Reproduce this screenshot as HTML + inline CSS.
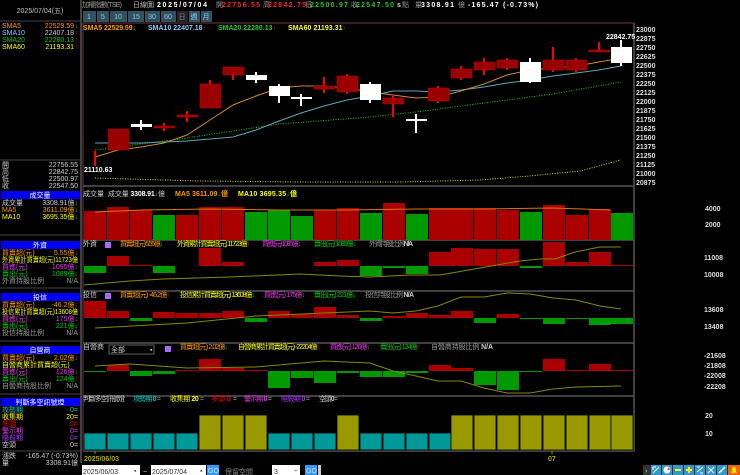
<!DOCTYPE html>
<html><head><meta charset="utf-8"><style>
html,body{margin:0;padding:0;background:#000;width:740px;height:475px;overflow:hidden}
svg{display:block}
text{font-family:"Liberation Sans","Noto Sans CJK TC",sans-serif;font-size:7px}
.b{font-weight:bold}
</style></head><body>
<svg width="740" height="475" viewBox="0 0 740 475" xmlns="http://www.w3.org/2000/svg">
<rect width="740" height="475" fill="#000"/>
<!-- left panel -->
<line x1="81" y1="0" x2="81" y2="463" stroke="#555" stroke-width="1.5"/>
<text x="40" y="13" fill="#bbb" text-anchor="middle" font-family="Liberation Serif" font-size="6">2025/07/04(五)</text>
<line x1="0" y1="21" x2="81" y2="21" stroke="#444"/>
<g font-family="Liberation Serif" font-size="6">
<text x="2" y="28" fill="#f90">SMA5</text><text x="74" y="28" fill="#f90" text-anchor="end">22529.59</text><text x="75" y="28" fill="#0c0">↓</text>
<text x="2" y="35" fill="#8cf">SMA10</text><text x="74" y="35" fill="#ccc" text-anchor="end">22407.18</text><text x="75" y="35" fill="#f00">↑</text>
<text x="2" y="42" fill="#0c0">SMA20</text><text x="74" y="42" fill="#0c0" text-anchor="end">22280.13</text><text x="75" y="42" fill="#f00">↑</text>
<text x="2" y="49" fill="#ff0">SMA60</text><text x="74" y="49" fill="#ff0" text-anchor="end">21193.31</text><text x="75" y="49" fill="#f00">↑</text>
</g>
<line x1="0" y1="160" x2="81" y2="160" stroke="#444"/>
<g fill="#ccc" font-size="6">
<text x="2" y="167">開</text><text x="78" y="167" text-anchor="end">22756.55</text>
<text x="2" y="174">高</text><text x="78" y="174" text-anchor="end">22842.75</text>
<text x="2" y="181">低</text><text x="78" y="181" text-anchor="end">22500.97</text>
<text x="2" y="188">收</text><text x="78" y="188" text-anchor="end">22547.50</text>
</g>
<g font-size="6">
<rect x="1" y="191" width="79" height="8" fill="#0000f0"/><text x="40" y="197.5" fill="#fff" text-anchor="middle">成交量</text>
<text x="2" y="205" fill="#ccc">成交量</text><text x="78" y="205" fill="#ccc" text-anchor="end">3308.91億<tspan fill="#0c0">↓</tspan></text>
<text x="2" y="212" fill="#f90">MA5</text><text x="78" y="212" fill="#f90" text-anchor="end">3611.09億<tspan fill="#0c0">↓</tspan></text>
<text x="2" y="219" fill="#ff0">MA10</text><text x="78" y="219" fill="#ff0" text-anchor="end">3695.35億<tspan fill="#0c0">↓</tspan></text>
<line x1="0" y1="235" x2="81" y2="235" stroke="#444"/>
<rect x="1" y="241" width="79" height="8" fill="#0000f0"/><text x="40" y="247.5" fill="#fff" text-anchor="middle">外資</text>
<text x="2" y="255" fill="#f90">買賣超(元)</text><text x="78" y="255" fill="#f90" text-anchor="end">5.55億<tspan fill="#0c0">↓</tspan></text>
<text x="2" y="262" fill="#ff0" textLength="76" lengthAdjust="spacingAndGlyphs">外資累計買賣超(元)11723億</text>
<text x="2" y="269" fill="#e3e">買進(元)</text><text x="78" y="269" fill="#e3e" text-anchor="end">1095億<tspan fill="#0c0">↓</tspan></text>
<text x="2" y="276" fill="#0c0">賣出(元)</text><text x="78" y="276" fill="#0c0" text-anchor="end">1089億<tspan fill="#0c0">↓</tspan></text>
<text x="2" y="283" fill="#999">外資持股比例</text><text x="78" y="283" fill="#999" text-anchor="end">N/A</text>
<line x1="0" y1="288" x2="81" y2="288" stroke="#444"/>
<rect x="1" y="293" width="79" height="8" fill="#0000f0"/><text x="40" y="299.5" fill="#fff" text-anchor="middle">投信</text>
<text x="2" y="307" fill="#f90">買賣超(元)</text><text x="78" y="307" fill="#f90" text-anchor="end">-46.2億<tspan fill="#f00">↑</tspan></text>
<text x="2" y="314" fill="#ff0" textLength="76" lengthAdjust="spacingAndGlyphs">投信累計買賣超(元)13608億</text>
<text x="2" y="321" fill="#e3e">買進(元)</text><text x="78" y="321" fill="#e3e" text-anchor="end">175億<tspan fill="#0c0">↓</tspan></text>
<text x="2" y="328" fill="#0c0">賣出(元)</text><text x="78" y="328" fill="#0c0" text-anchor="end">221億<tspan fill="#0c0">↓</tspan></text>
<text x="2" y="335" fill="#999">投信持股比例</text><text x="78" y="335" fill="#999" text-anchor="end">N/A</text>
<line x1="0" y1="341" x2="81" y2="341" stroke="#444"/>
<rect x="1" y="346" width="79" height="8" fill="#0000f0"/><text x="40" y="352.5" fill="#fff" text-anchor="middle">自營商</text>
<text x="2" y="360" fill="#f90">買賣超(元)</text><text x="78" y="360" fill="#f90" text-anchor="end">2.02億<tspan fill="#0c0">↓</tspan></text>
<text x="2" y="367" fill="#ff0">自營商累計買賣超(元)</text>
<text x="2" y="374" fill="#e3e">買進(元)</text><text x="78" y="374" fill="#e3e" text-anchor="end">126億<tspan fill="#0c0">↓</tspan></text>
<text x="2" y="381" fill="#0c0">賣出(元)</text><text x="78" y="381" fill="#0c0" text-anchor="end">124億<tspan fill="#f00">↑</tspan></text>
<text x="2" y="388" fill="#999">自營商持股比例</text><text x="78" y="388" fill="#999" text-anchor="end">N/A</text>
<line x1="0" y1="394" x2="81" y2="394" stroke="#444"/>
<rect x="1" y="398" width="79" height="8" fill="#0000f0"/><text x="40" y="404.5" fill="#fff" text-anchor="middle">判斷多空訊號燈</text>
<text x="2" y="412" fill="#0cc">攻勢期</text><text x="78" y="412" fill="#0cc" text-anchor="end">0=</text>
<text x="2" y="419" fill="#ff0">收集期</text><text x="78" y="419" fill="#ff0" text-anchor="end">20=</text>
<text x="2" y="426" fill="#f00">多頭</text><text x="78" y="426" fill="#f00" text-anchor="end">0=</text>
<text x="2" y="433" fill="#e3e">警示期</text><text x="78" y="433" fill="#e3e" text-anchor="end">0=</text>
<text x="2" y="440" fill="#a3f">賠殺期</text><text x="78" y="440" fill="#a3f" text-anchor="end">0=</text>
<text x="2" y="447" fill="#ccc">空頭</text><text x="78" y="447" fill="#ccc" text-anchor="end">0=</text>
<line x1="0" y1="451" x2="81" y2="451" stroke="#444"/>
<text x="2" y="458" fill="#ccc">漲跌</text><text x="78" y="458" fill="#ccc" text-anchor="end">-165.47 (-0.73%)</text>
<text x="2" y="465" fill="#ccc">量</text><text x="78" y="465" fill="#ccc" text-anchor="end">3308.91億</text>
</g>

<!-- top header -->
<text x="82" y="7" fill="#999" font-size="6" textLength="40">加權指數(TSE)</text>
<text x="133" y="7" fill="#bbb" font-size="6">日線圖</text>
<text x="157" y="7" fill="#fff" class="b" font-size="7.5" textLength="50">2025/07/04</text>
<text x="216" y="7" fill="#999" font-size="5">開</text><text x="222" y="7" fill="#f22" class="b" font-size="7.5" textLength="38">22756.55</text>
<text x="263" y="7" fill="#999" font-size="5">高</text><text x="268" y="7" fill="#f22" class="b" font-size="7.5" textLength="38">22842.75</text>
<text x="305" y="7" fill="#999" font-size="5">低</text><text x="310" y="7" fill="#2c2" class="b" font-size="7.5" textLength="38">22500.97</text>
<text x="351" y="7" fill="#999" font-size="5">收</text><text x="356" y="7" fill="#2c2" class="b" font-size="7.5" textLength="38">22547.50</text>
<text x="397" y="7" fill="#ddd" class="b" font-size="6">s</text><text x="402" y="7" fill="#999" font-size="5">點</text>
<text x="415" y="7" fill="#999" font-size="5">量</text><text x="421" y="7" fill="#fff" class="b" font-size="7.5" textLength="33">3308.91</text>
<text x="458" y="7" fill="#999" font-size="5">億</text><text x="468" y="7" fill="#fff" class="b" font-size="7.5" textLength="70">-165.47 (-0.73%)</text>
<g fill="#34505c">
<rect x="83" y="11" width="13" height="11"/><rect x="97" y="11" width="12" height="11"/><rect x="110" y="11" width="17" height="11"/><rect x="128" y="11" width="16" height="11"/><rect x="145" y="11" width="15" height="11"/><rect x="161" y="11" width="15" height="11"/><rect x="177" y="11" width="11" height="11" fill="#222"/><rect x="189" y="11" width="11" height="11"/><rect x="201" y="11" width="11" height="11"/>
</g>
<g fill="#7cf" font-size="7" text-anchor="middle">
<text x="89" y="19">1</text><text x="103" y="19">5</text><text x="118" y="19">10</text><text x="136" y="19">15</text><text x="152" y="19">30</text><text x="168" y="19">60</text><text x="182" y="19" fill="#888">日</text><text x="194" y="19">週</text><text x="206" y="19">月</text>
</g>
<g class="b" font-size="6.5">
<text x="83" y="30" fill="#f90" textLength="53">SMA5 22529.59<tspan fill="#0c0">↓</tspan></text>
<text x="148" y="30" fill="#8cf" textLength="58">SMA10 22407.18<tspan fill="#f00">↑</tspan></text>
<text x="218" y="30" fill="#2c2" textLength="58">SMA20 22280.13<tspan fill="#f00">↑</tspan></text>
<text x="288" y="30" fill="#ff0" textLength="58">SMA60 21193.31<tspan fill="#f00">↑</tspan></text>
</g>
<!-- chart borders -->
<rect x="83" y="23" width="551" height="428" fill="none" stroke="#6a3a4a"/>
<g stroke="#555" stroke-width="1.5">
<line x1="83" y1="186" x2="634" y2="186"/><line x1="83" y1="240" x2="634" y2="240"/><line x1="83" y1="291" x2="634" y2="291"/><line x1="83" y1="343" x2="634" y2="343"/><line x1="83" y1="396" x2="634" y2="396"/><line x1="83" y1="451" x2="634" y2="451"/>
<line x1="634" y1="23" x2="634" y2="451"/>
</g>
<!-- price axis -->
<g fill="#ddd" font-size="6.5" class="b">
<text x="636" y="32">23000</text><text x="636" y="41">22875</text><text x="636" y="50">22750</text><text x="636" y="59">22625</text><text x="636" y="68">22500</text><text x="636" y="77">22375</text><text x="636" y="86">22250</text><text x="636" y="95">22125</text><text x="636" y="104">22000</text><text x="636" y="113">21875</text><text x="636" y="122">21750</text><text x="636" y="131">21625</text><text x="636" y="140">21500</text><text x="636" y="149">21375</text><text x="636" y="158">21250</text><text x="636" y="167">21125</text><text x="636" y="176">21000</text><text x="636" y="185">20875</text>
<text x="705" y="211">4000</text><text x="705" y="227">2000</text>
<text x="704" y="260">11008</text><text x="704" y="277">10008</text>
<text x="704" y="312">13608</text><text x="704" y="329">13408</text>
<text x="704" y="358">-21608</text><text x="704" y="368">-21808</text><text x="704" y="378">-22008</text><text x="704" y="389">-22208</text>
<text x="705" y="418">20</text><text x="705" y="436">10</text>
</g>
<!-- MA lines -->
<polyline fill="none" stroke="#dd0" stroke-width="1" stroke-dasharray="1,1.5" points="95,178 200,181 300,182 400,182 480,180 530,176 580,171 621,160"/>
<polyline fill="none" stroke="#2c2" stroke-width="1" stroke-dasharray="1,1.5" points="95,150 187,138 279,124 370,117 416,112 484,103 553,94 621,82"/>
<polyline fill="none" stroke="#5ab" stroke-width="1" points="95,143 141,143 187,141 233,137 256,130 279,121 301,113 324,106 347,100 370,96 393,91 416,91 438,92 461,90 484,87 507,83 530,80 553,76 576,73 599,70 621,66"/>
<polyline fill="none" stroke="#c83" stroke-width="1" points="95,157 118,150 141,147 164,143 187,135 210,120 233,105 256,96 279,88 301,86 324,86 347,88 370,92 393,95 416,98 438,97 461,91 484,84 507,75 530,70 553,68 576,66 599,62 621,58"/>
<!-- candles -->
<g stroke="#f00" stroke-width="2">
<line x1="95" y1="151" x2="95" y2="166"/><line x1="164" y1="123" x2="164" y2="131"/><line x1="187" y1="111" x2="187" y2="122"/><line x1="210" y1="80" x2="210" y2="86"/><line x1="233" y1="70" x2="233" y2="80"/><line x1="324" y1="77" x2="324" y2="93"/><line x1="347" y1="74" x2="347" y2="94"/><line x1="393" y1="95" x2="393" y2="117"/><line x1="438" y1="86" x2="438" y2="103"/><line x1="461" y1="66" x2="461" y2="80"/><line x1="484" y1="58" x2="484" y2="75"/><line x1="507" y1="58" x2="507" y2="70"/><line x1="553" y1="47" x2="553" y2="72"/><line x1="576" y1="58" x2="576" y2="72"/><line x1="599" y1="42" x2="599" y2="52"/>
</g>
<g stroke="#fff" stroke-width="2">
<line x1="141" y1="120" x2="141" y2="130"/><line x1="256" y1="72" x2="256" y2="83"/><line x1="279" y1="84" x2="279" y2="103"/><line x1="301" y1="94" x2="301" y2="106"/><line x1="370" y1="82" x2="370" y2="103"/><line x1="416" y1="114" x2="416" y2="133"/><line x1="530" y1="58" x2="530" y2="83"/><line x1="621" y1="40" x2="621" y2="66"/>
</g>
<g fill="#900" stroke="#c00" stroke-width="0.5">
<rect x="108" y="129" width="21" height="21"/><rect x="154" y="126" width="21" height="2"/><rect x="177" y="115" width="21" height="2"/><rect x="200" y="84" width="21" height="24"/><rect x="223" y="67" width="21" height="8"/><rect x="314" y="86" width="21" height="3"/><rect x="337" y="76" width="21" height="16"/><rect x="383" y="98" width="21" height="6"/><rect x="428" y="88" width="21" height="13"/><rect x="451" y="69" width="21" height="9"/><rect x="474" y="62" width="21" height="8"/><rect x="497" y="60" width="21" height="8"/><rect x="543" y="60" width="21" height="10"/><rect x="566" y="60" width="21" height="10"/><rect x="589" y="50" width="21" height="2"/>
</g>
<g fill="#fff">
<rect x="131" y="124" width="21" height="3"/><rect x="246" y="75" width="21" height="5"/><rect x="269" y="86" width="21" height="10"/><rect x="291" y="97" width="21" height="2"/><rect x="360" y="84" width="21" height="16"/><rect x="406" y="119" width="21" height="2"/><rect x="520" y="62" width="21" height="20"/><rect x="611" y="47" width="21" height="16"/>
</g>
<text x="84" y="172" fill="#fff" class="b" font-size="6.5">21110.63</text>
<text x="606" y="39" fill="#fff" class="b" font-size="6.5">22842.75</text>
<!-- volume -->
<g font-size="6"><text x="83" y="196" fill="#ccc">成交量</text><text x="108" y="196" fill="#ccc" textLength="57">成交量 <tspan class="b" fill="#fff">3308.91</tspan><tspan fill="#0c0">↓</tspan>億</text><text x="175" y="196" fill="#f90" class="b" textLength="53">MA5 3611.09<tspan fill="#0c0">↓</tspan>億</text><text x="238" y="196" fill="#ff0" class="b" textLength="59">MA10 3695.35<tspan fill="#0c0">↓</tspan>億</text></g>
<g>
<rect x="84" y="211" width="22" height="29" fill="#a00"/><rect x="107" y="207" width="22" height="33" fill="#a00"/><rect x="130" y="210" width="22" height="30" fill="#a00"/><rect x="153" y="215" width="22" height="25" fill="#090"/><rect x="176" y="215" width="22" height="25" fill="#a00"/><rect x="199" y="207" width="22" height="33" fill="#a00"/><rect x="222" y="207" width="22" height="33" fill="#a00"/><rect x="245" y="212" width="22" height="28" fill="#090"/><rect x="268" y="210" width="22" height="30" fill="#090"/><rect x="291" y="216" width="22" height="24" fill="#090"/><rect x="314" y="210" width="22" height="30" fill="#a00"/><rect x="337" y="208" width="22" height="32" fill="#a00"/><rect x="360" y="213" width="22" height="27" fill="#090"/><rect x="383" y="203" width="22" height="37" fill="#a00"/><rect x="406" y="214" width="22" height="26" fill="#090"/><rect x="429" y="208" width="22" height="32" fill="#a00"/><rect x="451" y="208" width="22" height="32" fill="#a00"/><rect x="474" y="208" width="22" height="32" fill="#a00"/><rect x="497" y="210" width="22" height="30" fill="#a00"/><rect x="520" y="212" width="22" height="28" fill="#090"/><rect x="543" y="205" width="22" height="35" fill="#a00"/><rect x="566" y="215" width="22" height="25" fill="#a00"/><rect x="589" y="209" width="22" height="31" fill="#a00"/><rect x="611" y="213" width="22" height="27" fill="#090"/>
</g>
<polyline fill="none" stroke="#d70" stroke-width="1" points="95,212 141,210 210,209 279,210 347,210 416,209 484,209 553,208 610,210"/>
<!-- foreign -->
<g font-size="5.5"><text x="83" y="246" fill="#ccc" font-size="6">外資</text><rect x="105" y="242" width="6" height="6" fill="#a6f"/><text x="120" y="246" fill="#f90" textLength="43">買賣超(元) 5.55億<tspan fill="#0c0">↓</tspan></text><text x="177" y="246" fill="#ff0" textLength="73">外資累計買賣超(元) 11723億<tspan fill="#f00">↑</tspan></text><text x="262" y="246" fill="#e3e" textLength="39">買進(元) 1095億<tspan fill="#0c0">↓</tspan></text><text x="314" y="246" fill="#0c0" textLength="42">賣出(元) 1089億↓</text><text x="369" y="246" fill="#999" textLength="44">外資持股比例 <tspan class="b" fill="#ccc">N/A</tspan></text></g>
<g fill="#a00">
<rect x="107" y="256" width="22" height="10"/><rect x="130" y="265" width="22" height="1"/><rect x="199" y="248" width="22" height="18"/><rect x="222" y="262" width="22" height="4"/><rect x="314" y="262" width="22" height="4"/><rect x="337" y="260" width="22" height="6"/><rect x="429" y="252" width="22" height="14"/><rect x="451" y="248" width="22" height="18"/><rect x="474" y="249" width="22" height="17"/><rect x="497" y="249" width="22" height="17"/><rect x="543" y="242" width="22" height="24"/><rect x="566" y="262" width="22" height="4"/><rect x="589" y="252" width="22" height="14"/><rect x="611" y="265" width="22" height="1"/>
</g>
<g fill="#090">
<rect x="84" y="266" width="22" height="7"/><rect x="153" y="266" width="22" height="7"/><rect x="360" y="266" width="22" height="10"/><rect x="383" y="266" width="22" height="2"/><rect x="406" y="266" width="22" height="8"/><rect x="520" y="266" width="22" height="2"/>
</g>
<polyline fill="none" stroke="#880" stroke-width="1" points="84,285 130,281 163,279 230,277 300,274 340,276 370,277 410,275 440,275 480,268 520,261 540,259 555,259 575,252 600,247 621,247"/>
<!-- trust -->
<g font-size="5.5"><text x="83" y="297" fill="#ccc" font-size="6">投信</text><rect x="105" y="293" width="6" height="6" fill="#a6f"/><text x="120" y="297" fill="#f90" textLength="50">買賣超(元) -46.2億<tspan fill="#f00">↑</tspan></text><text x="180" y="297" fill="#ff0" textLength="75">投信累計買賣超(元) 13608億<tspan fill="#0c0">↓</tspan></text><text x="264" y="297" fill="#e3e" textLength="41">買進(元) 175億<tspan fill="#0c0">↓</tspan></text><text x="314" y="297" fill="#0c0" textLength="42">賣出(元) 221億↓</text><text x="365" y="297" fill="#999" textLength="49">投信持股比例 <tspan class="b" fill="#ccc">N/A</tspan></text></g>
<g fill="#a00">
<rect x="84" y="301" width="22" height="17"/><rect x="107" y="311" width="22" height="7"/><rect x="153" y="312" width="22" height="6"/><rect x="176" y="313" width="22" height="5"/><rect x="199" y="313" width="22" height="5"/><rect x="222" y="311" width="22" height="7"/><rect x="268" y="311" width="22" height="7"/><rect x="291" y="314" width="22" height="4"/><rect x="314" y="307" width="22" height="11"/><rect x="337" y="315" width="22" height="3"/><rect x="383" y="316" width="22" height="2"/><rect x="406" y="313" width="22" height="5"/><rect x="429" y="315" width="22" height="3"/><rect x="451" y="311" width="22" height="7"/><rect x="497" y="314" width="22" height="4"/>
</g>
<g fill="#090">
<rect x="130" y="318" width="22" height="3"/><rect x="245" y="318" width="22" height="4"/><rect x="360" y="318" width="22" height="3"/><rect x="474" y="318" width="22" height="5"/><rect x="520" y="318" width="22" height="1"/><rect x="543" y="318" width="22" height="6"/><rect x="566" y="318" width="22" height="1"/><rect x="589" y="318" width="22" height="7"/><rect x="611" y="318" width="22" height="6"/>
</g>
<polyline fill="none" stroke="#880" stroke-width="1" points="95,328 150,325 187,323 256,316 324,313 370,311 393,313 416,311 438,306 461,297 484,297 507,293 530,294 553,298 576,300 600,306 621,309"/>
<!-- dealer -->
<g font-size="5.5"><text x="83" y="349" fill="#ccc" font-size="6">自營商</text><rect x="109" y="345" width="45" height="9" fill="#000" stroke="#888" stroke-width="0.7"/><text x="111" y="352" fill="#ccc">全部</text><text x="150" y="352" fill="#ccc">▪</text><rect x="165" y="346" width="6" height="6" fill="#a6f"/><text x="180" y="349" fill="#f90" textLength="48">買賣超(元) 2.02億<tspan fill="#0c0">↓</tspan></text><text x="238" y="349" fill="#ff0" textLength="82">自營商累計買賣超(元) -22204億<tspan fill="#f00">↑</tspan></text><text x="330" y="349" fill="#e3e" textLength="40">買進(元) 126億<tspan fill="#0c0">↓</tspan></text><text x="380" y="349" fill="#0c0" textLength="40">賣出(元) 124億<tspan fill="#f00">↑</tspan></text><text x="431" y="349" fill="#999" textLength="62">自營商持股比例 <tspan class="b" fill="#ccc">N/A</tspan></text></g>
<g fill="#a00">
<rect x="107" y="365" width="22" height="6"/><rect x="176" y="370" width="22" height="1"/><rect x="199" y="359" width="22" height="12"/><rect x="222" y="368" width="22" height="3"/><rect x="245" y="370" width="22" height="1"/><rect x="429" y="365" width="22" height="6"/><rect x="451" y="368" width="22" height="3"/><rect x="543" y="359" width="22" height="12"/><rect x="566" y="370" width="22" height="1"/><rect x="589" y="364" width="22" height="7"/><rect x="611" y="370" width="22" height="1"/>
</g>
<g fill="#090">
<rect x="84" y="371" width="22" height="1"/><rect x="130" y="371" width="22" height="5"/><rect x="153" y="371" width="22" height="3"/><rect x="268" y="371" width="22" height="17"/><rect x="291" y="371" width="22" height="7"/><rect x="314" y="371" width="22" height="12"/><rect x="337" y="371" width="22" height="2"/><rect x="360" y="371" width="22" height="6"/><rect x="383" y="371" width="22" height="6"/><rect x="406" y="371" width="22" height="2"/><rect x="474" y="371" width="22" height="14"/><rect x="497" y="371" width="22" height="19"/><rect x="520" y="371" width="22" height="1"/>
</g>
<polyline fill="none" stroke="#880" stroke-width="1" points="95,366 130,364 187,368 256,367 324,361 370,363 393,371 416,376 438,381 461,381 484,388 507,393 530,393 553,389 576,387 621,386"/>
<!-- signals -->
<g font-size="5.5"><text x="83" y="401" fill="#ccc" textLength="42">判斷多空訊號燈</text><text x="133" y="401" fill="#0cc" textLength="28">攻勢期 <tspan class="b">0</tspan> <tspan fill="#999">=</tspan></text><text x="170" y="401" fill="#ff0" textLength="34">收集期 <tspan class="b">20</tspan> <tspan fill="#999">=</tspan></text><text x="211" y="401" fill="#f00" textLength="26">多頭 <tspan class="b">0</tspan> <tspan fill="#999">=</tspan></text><text x="244" y="401" fill="#e3e" textLength="28">警示期 <tspan class="b">0</tspan> <tspan fill="#999">=</tspan></text><text x="281" y="401" fill="#a3f" textLength="29">賠殺期 <tspan class="b">0</tspan> <tspan fill="#999">=</tspan></text><text x="319" y="401" fill="#ccc" textLength="19">空頭 <tspan class="b">0</tspan> <tspan fill="#999">=</tspan></text></g>
<g stroke="#000" stroke-width="0.8">
<g fill="#099"><rect x="84" y="433" width="22" height="17"/><rect x="107" y="433" width="22" height="17"/><rect x="130" y="433" width="22" height="17"/><rect x="153" y="433" width="22" height="17"/><rect x="176" y="433" width="22" height="17"/><rect x="268" y="433" width="22" height="17"/><rect x="291" y="433" width="22" height="17"/><rect x="314" y="433" width="22" height="17"/><rect x="360" y="433" width="22" height="17"/><rect x="383" y="433" width="22" height="17"/><rect x="406" y="433" width="22" height="17"/><rect x="429" y="433" width="22" height="17"/></g>
<g fill="#990"><rect x="199" y="415" width="22" height="35"/><rect x="222" y="415" width="22" height="35"/><rect x="245" y="415" width="22" height="35"/><rect x="337" y="415" width="22" height="35"/><rect x="451" y="415" width="22" height="35"/><rect x="474" y="415" width="22" height="35"/><rect x="497" y="415" width="22" height="35"/><rect x="520" y="415" width="22" height="35"/><rect x="543" y="415" width="22" height="35"/><rect x="566" y="415" width="22" height="35"/><rect x="589" y="415" width="22" height="35"/><rect x="611" y="415" width="22" height="35"/></g>
</g>
<line x1="95" y1="451" x2="95" y2="454" stroke="#990"/><line x1="552" y1="451" x2="552" y2="454" stroke="#990"/>
<text x="84" y="461" fill="#aa0" class="b" font-size="6.5">2025/06/03</text>
<text x="548" y="461" fill="#aa0" class="b" font-size="6.5">07</text>
<!-- bottom toolbar -->
<rect x="81" y="464" width="659" height="11" fill="#000"/>
<rect x="82" y="465" width="58" height="10" fill="#fff"/><text x="83" y="474" fill="#333" font-size="8.5">2025/06/03</text><text x="134" y="473" fill="#555" font-size="6">▪</text>
<text x="143" y="474" fill="#ccc" font-size="8">~</text>
<rect x="151" y="465" width="55" height="10" fill="#fff"/><text x="152" y="474" fill="#333" font-size="8.5">2025/07/04</text><text x="200" y="473" fill="#555" font-size="6">▪</text>
<rect x="207" y="465" width="12" height="10" fill="#39f"/><text x="208" y="473" fill="#cef" font-size="6">GO</text>
<text x="225" y="474" fill="#888" font-size="10">保留空間</text>
<rect x="272" y="465" width="28" height="10" fill="#fff"/><text x="274" y="474" fill="#333" font-size="8.5">3</text><text x="294" y="473" fill="#555" font-size="6">÷</text>
<rect x="305" y="465" width="12" height="10" fill="#39f"/><text x="306" y="473" fill="#cef" font-size="6">GO</text>
<rect x="318" y="465" width="3" height="10" fill="#ccc"/>
<rect x="643" y="465" width="97" height="10" fill="#333"/>
<g fill="#39c"><rect x="651" y="465" width="10" height="10"/><rect x="662" y="465" width="10" height="10"/><rect x="673" y="465" width="10" height="10"/><rect x="684" y="465" width="10" height="10"/><rect x="695" y="465" width="10" height="10"/><rect x="706" y="465" width="10" height="10"/><rect x="717" y="465" width="10" height="10"/></g>
<rect x="728" y="465" width="12" height="10" fill="#e60"/>
<text x="645" y="473" fill="#ccc" font-size="7">›</text>
<path d="M653,473 L659,467 M653,467 L653,470 M653,467 L656,467" stroke="#fff" fill="none"/>
<circle cx="667" cy="470" r="3.5" fill="#fff"/><path d="M667,470 L669,467 L670,470z" fill="#e44"/>
<line x1="675" y1="470" x2="681" y2="470" stroke="#ff0" stroke-width="2"/>
<path d="M686,470 H692 M689,467 V473" stroke="#ff0" stroke-width="2"/>
<path d="M697,472 L703,467 M697,467 h3 M703,473 h-3" stroke="#fff" fill="none"/>
<path d="M708,467 L714,473 M714,467 L708,473" stroke="#fff"/>
<path d="M719,473 L725,467" stroke="#fff" stroke-width="1.5"/>
<path d="M731,473 h6 l-1,-2 v-2 a2,2 0 0 0 -4,0 v2z" fill="#fd0"/>
</svg>
</body></html>
